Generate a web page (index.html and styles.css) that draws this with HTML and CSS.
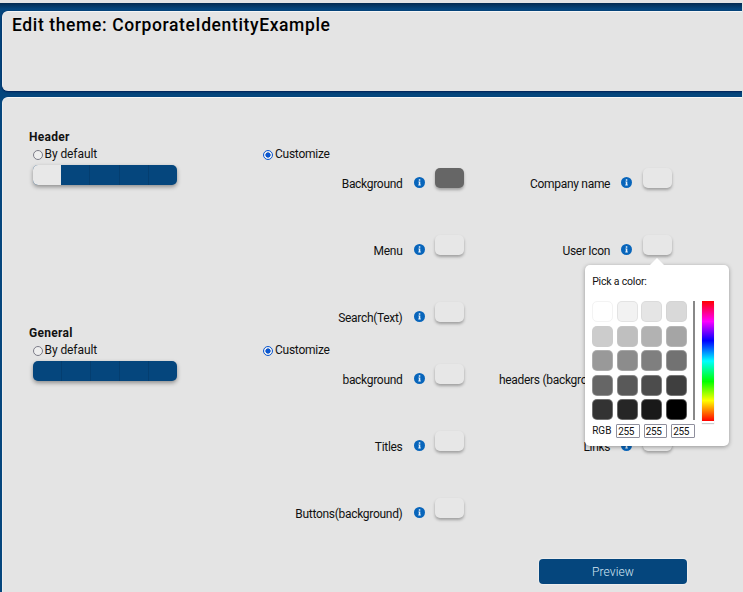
FILE: index.html
```html
<!DOCTYPE html>
<html lang="en">
<head>
<meta charset="utf-8">
<title>Edit theme</title>
<link rel="stylesheet" href="styles.css">
</head>
<body>
<svg class="defs" width="0" height="0" aria-hidden="true">
  <symbol id="info" viewBox="0 0 11 11">
    <circle cx="5.5" cy="5.5" r="5.5" fill="#0865bb"/>
    <path d="M4.8 2.3h1.5v1.4H4.8zM4.4 4.5h1.9v3.1h.5v.8H4.3v-.8h.5V5.3h-.4z" fill="#e8f1fa"/>
  </symbol>
</svg>
<div class="app">
  <div class="topbar"></div>
  <header class="card title-card"><h1>Edit theme: CorporateIdentityExample</h1></header>
  <main class="card form-card">
    <section class="group">
      <div class="preset">
        <h2>Header</h2>
        <label class="option"><span class="radio"></span>By default</label>
        <div class="palette"><i class="light"></i><i></i><i></i><i></i><i></i></div>
      </div>
      <div class="custom">
        <label class="option"><span class="radio on"></span>Customize</label>
        <div class="fields">
          <div class="field"><span>Background</span><svg><use href="#info"/></svg><b class="swatch dark"></b></div>
          <div class="field"><span>Company name</span><svg><use href="#info"/></svg><b class="swatch"></b></div>
          <div class="field"><span>Menu</span><svg><use href="#info"/></svg><b class="swatch"></b></div>
          <div class="field picker-anchor"><span>User Icon</span><svg><use href="#info"/></svg><b class="swatch"></b>
            <div class="picker">
              <p>Pick a color:</p>
              <div class="picker-body">
                <div class="shades">
                  <i class="s1"></i><i class="s2"></i><i class="s3"></i><i class="s4"></i>
                  <i class="s5"></i><i class="s6"></i><i class="s7"></i><i class="s8"></i>
                  <i class="s9"></i><i class="s10"></i><i class="s11"></i><i class="s12"></i>
                  <i class="s13"></i><i class="s14"></i><i class="s15"></i><i class="s16"></i>
                  <i class="s17"></i><i class="s18"></i><i class="s19"></i><i class="s20"></i>
                </div>
                <div class="divider"></div>
                <div class="hue"></div>
              </div>
              <div class="rgb"><span>RGB</span><em>255</em><em>255</em><em>255</em></div>
            </div>
          </div>
          <div class="field"><span>Search(Text)</span><svg><use href="#info"/></svg><b class="swatch"></b></div>
        </div>
      </div>
    </section>
    <section class="group">
      <div class="preset">
        <h2>General</h2>
        <label class="option"><span class="radio"></span>By default</label>
        <div class="palette"><i></i><i></i><i></i><i></i><i></i></div>
      </div>
      <div class="custom">
        <label class="option"><span class="radio on"></span>Customize</label>
        <div class="fields">
          <div class="field"><span>background</span><svg><use href="#info"/></svg><b class="swatch"></b></div>
          <div class="field"><span>headers (background)</span><svg><use href="#info"/></svg><b class="swatch"></b></div>
          <div class="field"><span>Titles</span><svg><use href="#info"/></svg><b class="swatch"></b></div>
          <div class="field"><span>Links</span><svg><use href="#info"/></svg><b class="swatch"></b></div>
          <div class="field"><span>Buttons(background)</span><svg><use href="#info"/></svg><b class="swatch"></b></div>
        </div>
      </div>
    </section>
    <button class="preview">Preview</button>
  </main>
</div>
</body>
</html>
```
FILE: styles.css
```css
* { box-sizing: border-box; }
body {
  margin: 0;
  height: 592px;
  overflow: hidden;
  background: #e4e4e4;
  font: 12px/14px Roboto, sans-serif;
  color: #111;
}
h1, h2, p { margin: 0; }
.defs { display: block; }
.app {
  width: 742px;
  height: 592px;
  overflow: hidden;
  background: #05467d;
}
.topbar {
  height: 11px;
  border-top: 3px solid #e4e4e4;
  background: linear-gradient(#032a50, #05467d 75%);
}
.card {
  margin-left: 2px;
  background: #e4e4e4;
  border-top: 1px solid #f6f6f6;
  border-left: 1px solid #eee;
}
.title-card {
  height: 80px;
  padding: 3px 9px;
  border-radius: 6px 0 0 6px;
  box-shadow: 0 1px 2px #001f55;
}
h1 {
  font-size: 17.5px;
  line-height: 20px;
  font-weight: 500;
  letter-spacing: .62px;
  color: #000;
}
.form-card {
  margin-top: 6px;
  height: 520px;
  padding: 32px 0 0 26px;
  border-radius: 6px 0 0 0;
}
.group {
  display: grid;
  grid-template-columns: 233px 1fr;
  height: 196px;
}
h2 {
  font-size: 12px;
  line-height: 14px;
  font-weight: 700;
  letter-spacing: .28px;
}
.option {
  display: flex;
  align-items: center;
  gap: 2px;
  height: 14px;
  margin-top: 3px;
  padding-left: 3.5px;
  letter-spacing: -.08px;
}
.radio {
  width: 10px;
  height: 10px;
  margin-top: 2px;
  border: 1.5px solid #7c7c88;
  border-radius: 50%;
  background: #eee;
}
.radio.on {
  border: 1.5px solid #0b57d0;
  background: radial-gradient(circle, #0b57d0 2.3px, #eee 2.9px);
}
.palette {
  display: flex;
  width: 144px;
  height: 20px;
  margin: 4px 0 0 4px;
  border-radius: 5px;
  overflow: hidden;
  background: #05467d;
  box-shadow: 0 2px 4px rgba(0, 0, 0, .38);
}
.palette i {
  flex: 1;
  border-right: 1px solid #043e70;
}
.palette i:last-child { border: 0; }
.palette .light { background: #e8e8e8; border: 0; }
.custom .option { margin-top: 17px; padding-left: 1px; letter-spacing: -.25px; }
.fields {
  display: grid;
  grid-template-columns: 202px 207.7px;
  grid-auto-rows: 67px;
  margin-top: 7px;
}
.field {
  display: flex;
  justify-content: flex-end;
  align-items: flex-start;
  position: relative;
  white-space: nowrap;
}
.field > span { margin-top: 9px; letter-spacing: -.3px; }
.field svg { width: 11px; height: 11px; margin: 9px 10.5px 0 11px; }
.swatch {
  width: 29px;
  height: 20px;
  border-radius: 5px;
  background: #e7e7e7;
  box-shadow: 0 2px 3px rgba(0, 0, 0, .3);
}
.swatch.dark { background: #666; }
.picker-anchor { z-index: 2; }
.picker {
  position: absolute;
  right: -57px;
  top: 30px;
  width: 144px;
  height: 181px;
  padding: 10px 7.5px 0;
  border-radius: 5px;
  background: #fff;
  box-shadow: 0 1px 4px rgba(0, 0, 0, .35);
}
.picker::before {
  content: "";
  position: absolute;
  left: 64px;
  top: -7px;
  border: solid transparent;
  border-width: 0 8px 8px;
  border-bottom-color: #fff;
}
.picker p { font-size: 10.5px; line-height: 14px; letter-spacing: -.2px; }
.picker-body { display: flex; margin-top: 12px; }
.shades {
  display: grid;
  grid-template-columns: repeat(4, 21px);
  grid-auto-rows: 21px;
  gap: 3.5px;
}
.shades i { border-radius: 5px; border: 1px solid rgba(205, 205, 205, .4); }
.s1 { background: #fff; } .s2 { background: #f2f2f2; } .s3 { background: #e5e5e5; } .s4 { background: #d9d9d9; }
.s5 { background: #ccc; } .s6 { background: #bfbfbf; } .s7 { background: #b2b2b2; } .s8 { background: #a5a5a5; }
.s9 { background: #999; } .s10 { background: #8c8c8c; } .s11 { background: #7f7f7f; } .s12 { background: #727272; }
.s13 { background: #666; } .s14 { background: #595959; } .s15 { background: #4c4c4c; } .s16 { background: #3f3f3f; }
.s17 { background: #333; } .s18 { background: #262626; } .s19 { background: #191919; } .s20 { background: #000; }
.shades .s1 { border-color: #f3f3f3; }
.divider { width: 1.5px; height: 119px; margin-left: 6.5px; background: #888; }
.hue {
  width: 12px;
  height: 120px;
  margin-left: 7px;
  background: linear-gradient(red, #f0f 17%, #00f 33%, #0ff 50%, #0f0 67%, #ff0 83%, red);
  box-shadow: 0 2px 0 #fff, 0 3px 1px #ccc;
}
.rgb {
  display: flex;
  gap: 4px;
  margin-top: 3px;
  font-size: 10px;
  line-height: 14px;
}
.rgb span { width: 20px; }
.rgb em {
  width: 23.5px;
  height: 14px;
  padding-left: 1px;
  border: 1px solid #8f8f9d;
  border-radius: 1px;
  font-style: normal;
  line-height: 13px;
  letter-spacing: -.4px;
}
.preview {
  display: block;
  width: 148px;
  height: 25px;
  margin: 37px 0 0 510px;
  padding: 0;
  border: 0;
  border-radius: 4px;
  background: #05467d;
  box-shadow: 0 0 1px 1px #eee;
  color: #d5e6f3;
  font: 300 12px/27px Roboto, sans-serif;
  letter-spacing: .1px;
}
```
